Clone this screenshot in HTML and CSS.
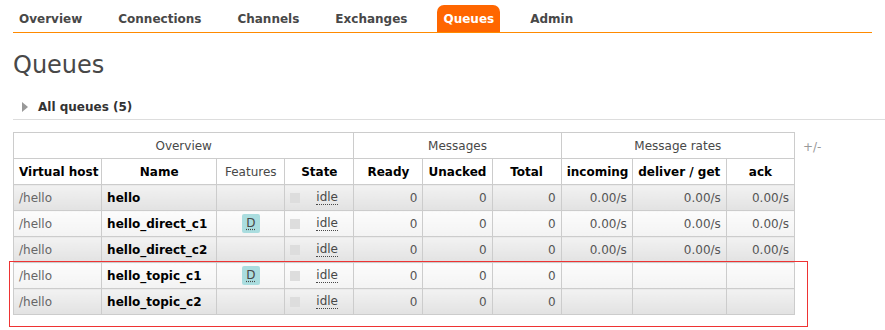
FILE: index.html
```html
<!DOCTYPE html>
<html lang="en">
<head>
    <meta charset="UTF-8">
    <title>RabbitMQ Management - Queues</title>
    <link rel="stylesheet" href="styles.css">
</head>
<body>
    <div id="menu">
        <ul>
            <li><a href="#">Overview</a></li>
            <li><a href="#">Connections</a></li>
            <li><a href="#">Channels</a></li>
            <li><a href="#">Exchanges</a></li>
            <li><a href="#" class="selected">Queues</a></li>
            <li><a href="#">Admin</a></li>
        </ul>
    </div>

    <div id="main">
        <h1>Queues</h1>
        <div class="section">
            <h2><span class="arrow"></span>All queues (5)</h2>
        </div>

        <div class="table-wrap">
            <table class="list">
                <colgroup>
                    <col class="c-vhost"><col class="c-name"><col class="c-feat"><col class="c-state">
                    <col class="c-num"><col class="c-num"><col class="c-num">
                    <col class="c-in"><col class="c-deliver"><col class="c-ack">
                </colgroup>
                <thead>
                    <tr>
                        <th colspan="4" class="group">Overview</th>
                        <th colspan="3" class="group">Messages</th>
                        <th colspan="3" class="group">Message rates</th>
                    </tr>
                    <tr>
                        <th>Virtual host</th>
                        <th>Name</th>
                        <th class="plain">Features</th>
                        <th>State</th>
                        <th>Ready</th>
                        <th>Unacked</th>
                        <th>Total</th>
                        <th>incoming</th>
                        <th>deliver / get</th>
                        <th>ack</th>
                    </tr>
                </thead>
                <tbody>
                    <tr class="alt1">
                        <td class="vhost">/hello</td>
                        <td class="name">hello</td>
                        <td></td>
                        <td><span class="state"><span class="dot"></span><abbr>idle</abbr></span></td>
                        <td class="r">0</td><td class="r">0</td><td class="r">0</td>
                        <td class="r">0.00/s</td><td class="r">0.00/s</td><td class="r">0.00/s</td>
                    </tr>
                    <tr class="alt2">
                        <td class="vhost">/hello</td>
                        <td class="name">hello_direct_c1</td>
                        <td class="c"><abbr class="feature">D</abbr></td>
                        <td><span class="state"><span class="dot"></span><abbr>idle</abbr></span></td>
                        <td class="r">0</td><td class="r">0</td><td class="r">0</td>
                        <td class="r">0.00/s</td><td class="r">0.00/s</td><td class="r">0.00/s</td>
                    </tr>
                    <tr class="alt1">
                        <td class="vhost">/hello</td>
                        <td class="name">hello_direct_c2</td>
                        <td></td>
                        <td><span class="state"><span class="dot"></span><abbr>idle</abbr></span></td>
                        <td class="r">0</td><td class="r">0</td><td class="r">0</td>
                        <td class="r">0.00/s</td><td class="r">0.00/s</td><td class="r">0.00/s</td>
                    </tr>
                    <tr class="alt2">
                        <td class="vhost">/hello</td>
                        <td class="name">hello_topic_c1</td>
                        <td class="c"><abbr class="feature">D</abbr></td>
                        <td><span class="state"><span class="dot"></span><abbr>idle</abbr></span></td>
                        <td class="r">0</td><td class="r">0</td><td class="r">0</td>
                        <td></td><td></td><td></td>
                    </tr>
                    <tr class="alt1">
                        <td class="vhost">/hello</td>
                        <td class="name">hello_topic_c2</td>
                        <td></td>
                        <td><span class="state"><span class="dot"></span><abbr>idle</abbr></span></td>
                        <td class="r">0</td><td class="r">0</td><td class="r">0</td>
                        <td></td><td></td><td></td>
                    </tr>
                </tbody>
            </table>
            <span class="toggle">+/-</span>
            <div class="highlight"></div>
        </div>
    </div>
</body>
</html>
```

FILE: styles.css
```css
html, body {
    height: 100%;
}

body {
    font-family: "DejaVu Sans", Verdana, sans-serif;
    font-size: 12px;
    color: #484848;
    margin: 0;
    padding: 0 13px;
    background: #ffffff;
}

#menu {
    padding-top: 5px;
    border-bottom: 1px solid #ff8a00;
}

#menu ul {
    display: flex;
    gap: 24px;
    margin: 0;
    padding: 0;
    list-style: none;
}

#menu a {
    display: block;
    height: 27px;
    line-height: 28px;
    padding: 0 6px;
    font-weight: bold;
    font-size: 12px;
    color: #484848;
    text-decoration: none;
    border-radius: 7px 7px 0 0;
}

#menu a.selected {
    background-color: #ff6600;
    color: #ffffff;
}

h1 {
    font-size: 24px;
    font-weight: normal;
    margin: 16px 0 0 0;
    line-height: 32px;
}

.section {
    border-bottom: 1px solid #dddddd;
    margin-top: 17px;
    margin-right: -13px;
}

.section h2 {
    display: flex;
    align-items: center;
    font-size: 12px;
    font-weight: bold;
    margin: 0;
    padding: 1px 0 4px 9px;
    line-height: 16px;
    color: #333333;
}

.arrow {
    width: 0;
    height: 0;
    border-top: 5px solid transparent;
    border-bottom: 5px solid transparent;
    border-left: 6px solid #999999;
    margin-right: 10px;
}

.table-wrap {
    position: relative;
    display: flex;
    align-items: flex-start;
    margin-top: 12px;
    padding-bottom: 16px;
}

table.list {
    border-collapse: collapse;
    table-layout: fixed;
    width: 782px;
}

.c-vhost { width: 88px; }
.c-name { width: 115px; }
.c-feat { width: 68px; }
.c-state { width: 69px; }
.c-num { width: 69px; }
.c-in { width: 71px; }
.c-deliver { width: 94px; }
.c-ack { width: 68px; }

table.list th,
table.list td {
    border: 1px solid #cccccc;
    height: 25px;
    padding: 0 5px;
    white-space: nowrap;
    overflow: hidden;
}

table.list th {
    text-align: center;
    font-weight: bold;
    color: #000000;
    background: #ffffff;
}

table.list th.group,
table.list th.plain {
    font-weight: normal;
    color: #484848;
}

tr.alt1 td {
    background: linear-gradient(to bottom, #f2f2f2, #e2e2e2);
}

tr.alt2 td {
    background: linear-gradient(to bottom, #fcfcfc, #f3f3f3);
}

td.vhost {
    color: #666666;
}

td.name {
    font-weight: bold;
    color: #000000;
}

td.r {
    text-align: right;
    color: #555555;
}

td.c {
    text-align: center;
}

abbr {
    text-decoration: none;
    border-bottom: 1px dotted #484848;
    color: #484848;
}

.feature {
    display: inline-block;
    background-color: #aadddf;
    border: none;
    border-radius: 2px;
    width: 18px;
    height: 19px;
    line-height: 19px;
    text-align: center;
    text-decoration: underline dotted;
    text-underline-offset: 2px;
}

.state {
    display: flex;
    align-items: center;
}

.state .dot {
    width: 10px;
    height: 10px;
    background-color: #dddddd;
    margin-right: 16px;
}

.state abbr {
    line-height: 13px;
}

.toggle {
    color: #999999;
    margin: 8px 0 0 8px;
}

.highlight {
    position: absolute;
    z-index: 2;
    left: -4px;
    top: 129px;
    width: 797px;
    height: 64px;
    border: 1px solid #ee3333;
    pointer-events: none;
}
```
